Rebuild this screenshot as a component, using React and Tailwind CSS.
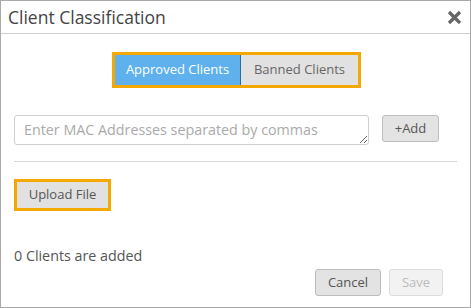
import React from 'react';

export default function App() {
  const font = { fontFamily: '"Open Sans", "Liberation Sans", sans-serif' };

  return (
    <div style={font} className="w-[471px] h-[308px] bg-white border border-[#a9a9a9] flex flex-col text-[#555]">
      {/* Header */}
      <div className="h-[33px] border-b border-[#cfcfcf] flex items-center justify-between pl-[7px] pr-[8px]">
        <span className="text-[17.5px] text-[#444]">Client Classification</span>
        <svg width="15" height="15" viewBox="0 0 15 15">
          <path d="M2 2 L13 13 M13 2 L2 13" stroke="#666" strokeWidth="3.2" strokeLinecap="butt" />
        </svg>
      </div>

      {/* Body */}
      <div className="flex-1 flex flex-col px-[13px]">
        <div className="flex justify-center mt-[18px] pl-[2px]">
          <div className="flex border-[3px] border-[#f5a800]">
            <button className="w-[126px] h-[30px] bg-[#5eb1ec] text-white text-[13px] border-r border-[#2a6c9c]">
              Approved Clients
            </button>
            <button className="w-[117px] h-[30px] bg-[#e1e1e1] text-[#666] text-[13px]">
              Banned Clients
            </button>
          </div>
        </div>

        <div className="flex items-start mt-[27px]">
          <textarea
            placeholder="Enter MAC Addresses separated by commas"
            className="w-[355px] h-[30px] border border-[#cfcfcf] rounded-[3px] px-[9px] py-[3px] text-[14.3px] leading-[22px] placeholder-[#aaa] resize-y overflow-hidden"
            style={font}
          />
          <button className="ml-[13px] w-[57px] h-[27px] bg-[#e3e3e3] border border-[#bdbdbd] rounded-[3px] text-[13px] text-[#555]">
            +Add
          </button>
        </div>

        <div className="h-px bg-[#d9d9d9] mt-[16px]" />

        <div className="mt-[17px]">
          <button className="w-[97px] h-[32px] border-[3px] border-[#f5a800] bg-[#e1e1e1] text-[13px] text-[#555]">
            Upload File
          </button>
        </div>

        <div className="mt-[35px] text-[14.3px] leading-[20px] text-[#555]">0 Clients are added</div>

        <div className="flex justify-end gap-[8px] mt-[3px] pr-[14px]">
          <button className="w-[66px] h-[27px] bg-[#e3e3e3] border border-[#bdbdbd] rounded-[3px] text-[13px] text-[#555]">
            Cancel
          </button>
          <button className="w-[54px] h-[27px] bg-[#f2f2f2] border border-[#dcdcdc] rounded-[3px] text-[13px] text-[#bbb]">
            Save
          </button>
        </div>
      </div>
    </div>
  );
}
